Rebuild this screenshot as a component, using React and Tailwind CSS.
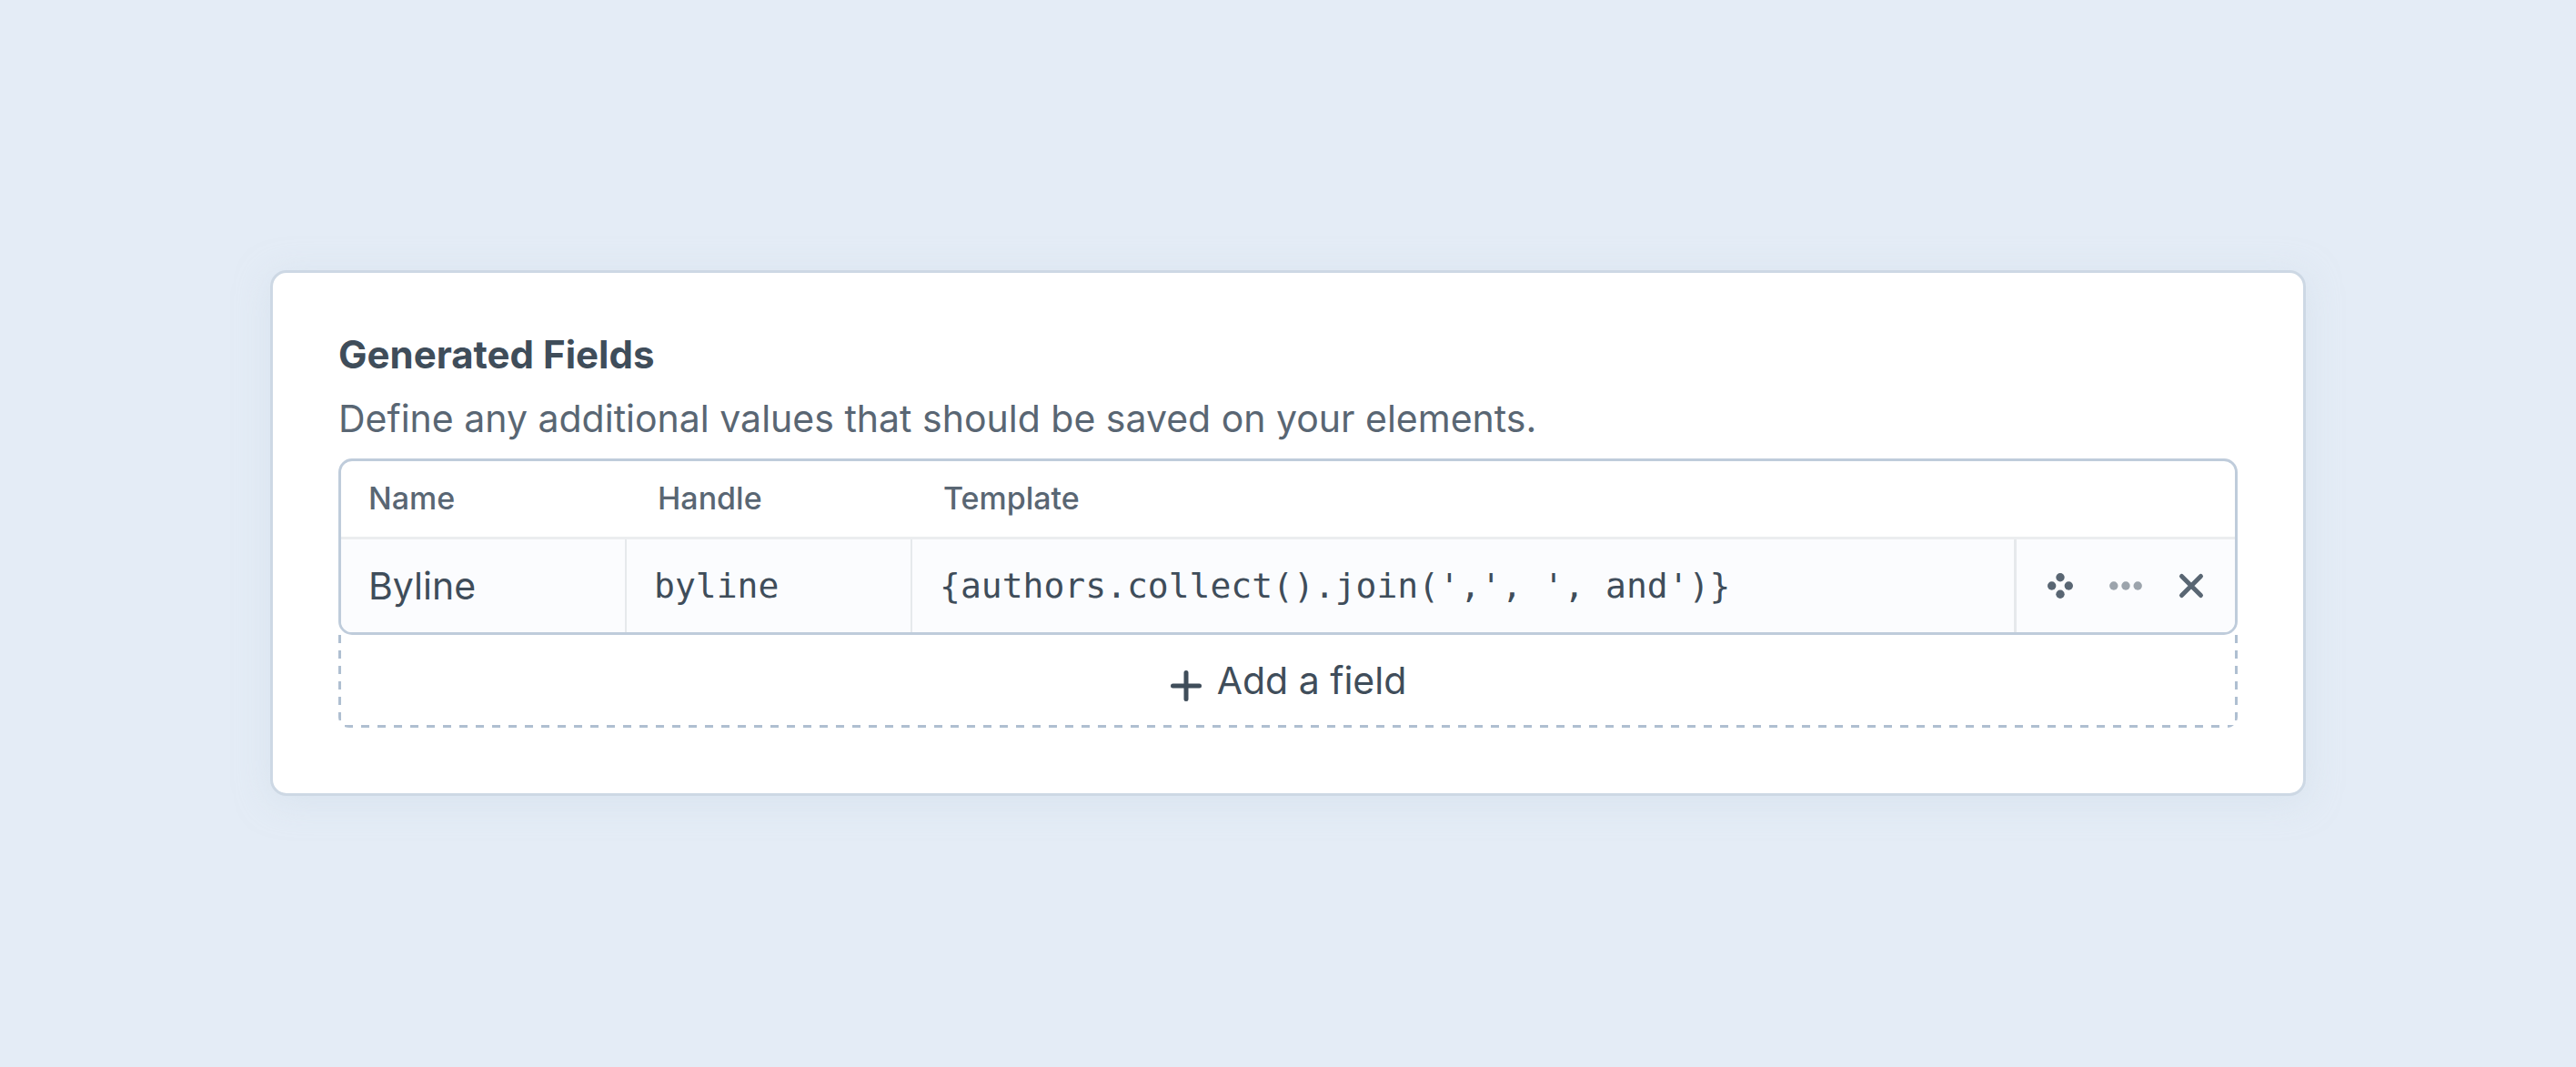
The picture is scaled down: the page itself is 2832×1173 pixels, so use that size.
const columns = [
  { id: "name", label: "Name" },
  { id: "handle", label: "Handle" },
  { id: "template", label: "Template" },
];

function MoveIcon() {
  return (
    <svg viewBox="0 0 36 36" className="size-9" fill="currentColor" aria-hidden="true">
      <circle cx="18" cy="8.7" r="4.7" />
      <circle cx="8.7" cy="18" r="4.7" />
      <circle cx="27.3" cy="18" r="4.7" />
      <circle cx="18" cy="27.3" r="4.7" />
    </svg>
  );
}

function EllipsisIcon() {
  return (
    <svg viewBox="0 0 36 36" className="size-9" fill="currentColor" aria-hidden="true">
      <circle cx="4.8" cy="18" r="4.7" />
      <circle cx="18" cy="18" r="4.7" />
      <circle cx="31.2" cy="18" r="4.7" />
    </svg>
  );
}

function RemoveIcon() {
  return (
    <svg viewBox="0 0 36 36" className="size-9" fill="none" stroke="currentColor" strokeWidth="5" strokeLinecap="round" aria-hidden="true">
      <path d="M7.5 7.5L28.5 28.5M28.5 7.5L7.5 28.5" />
    </svg>
  );
}

function PlusIcon() {
  return (
    <svg viewBox="0 0 36 48" className="h-12 w-9" fill="none" stroke="currentColor" strokeWidth="5" strokeLinecap="round" aria-hidden="true">
      <path d="M18 15.5V44.5M3.5 30H32.5" />
    </svg>
  );
}

const inputBase = "block w-full h-[102px] bg-transparent px-[30px] text-[#3f4d5a] outline-none";
const sans = "font-['Inter',sans-serif] text-[41px] leading-[60px]";
const mono = "font-['DejaVu_Sans_Mono',monospace] text-[38px] leading-[60px]";

export default function App() {
  return (
    <div className="min-h-screen bg-[#e4ecf6] px-[297px] py-[297px] font-['Inter',sans-serif] text-[#3f4d5a]">
      <main className="rounded-[18px] border-3 border-[#cdd8e4] bg-white px-[72px] pt-[60px] pb-[72px] shadow-[0_6px_36px_rgba(205,220,232,0.5)]">
        <h2 className="text-[42px] leading-[60px] font-bold">Generated Fields</h2>
        <p className="mt-[10px] text-[41px] leading-[60px] text-[#596673]">
          Define any additional values that should be saved on your elements.
        </p>
        <div className="mt-[14px] overflow-hidden rounded-[15px] border-3 border-[#bfccdb]">
          <table className="w-full table-fixed border-separate border-spacing-0">
            <colgroup>
              <col className="w-[312px]" />
              <col className="w-[314px]" />
              <col />
              <col className="w-[243px]" />
            </colgroup>
            <thead>
              <tr className="h-[86px] text-left text-[34px] leading-[48px] text-[#596673]">
                {columns.map((column) => (
                  <th
                    key={column.id}
                    id={column.id}
                    scope="col"
                    className="border-b-3 border-[#ebedef] pb-[2px] pl-9 font-medium first:pl-[30px]"
                  >
                    {column.label}
                  </th>
                ))}
                <td className="border-b-3 border-[#ebedef]" />
              </tr>
            </thead>
            <tbody>
              <tr className="bg-[#fbfcfe]">
                <td className="p-0">
                  <input aria-labelledby="name" defaultValue="Byline" className={`${inputBase} ${sans}`} />
                </td>
                <td className="border-l-2 border-[#e6e9ec] p-0">
                  <input aria-labelledby="handle" defaultValue="byline" className={`${inputBase} ${mono}`} />
                </td>
                <td className="border-l-2 border-[#e6e9ec] p-0">
                  <input
                    aria-labelledby="template"
                    defaultValue="{authors.collect().join(',', ', and')}"
                    className={`${inputBase} ${mono}`}
                  />
                </td>
                <td className="border-l-3 border-[#e6e9ec] p-0">
                  <div className="flex items-center gap-9 px-[30px] text-[#596673]">
                    <button type="button" aria-label="Reorder">
                      <MoveIcon />
                    </button>
                    <button type="button" aria-label="Actions" className="text-[#9ca4ac]">
                      <EllipsisIcon />
                    </button>
                    <button type="button" aria-label="Remove">
                      <RemoveIcon />
                    </button>
                  </div>
                </td>
              </tr>
            </tbody>
          </table>
        </div>
        <button
          type="button"
          className="flex h-[102px] w-full items-center justify-center gap-4 rounded-b-[12px] bg-[linear-gradient(to_bottom,#afbfd1_9px,transparent_9px),linear-gradient(to_bottom,#afbfd1_9px,transparent_9px),linear-gradient(to_right,#afbfd1_9px,transparent_9px)] bg-[position:left_top,right_top,7px_bottom] bg-[size:3px_17px,3px_17px,18px_3px] [background-repeat:repeat-y,repeat-y,repeat-x] pb-[3px] text-[41px] leading-[60px]"
        >
          <PlusIcon />
          Add a field
        </button>
      </main>
    </div>
  );
}
